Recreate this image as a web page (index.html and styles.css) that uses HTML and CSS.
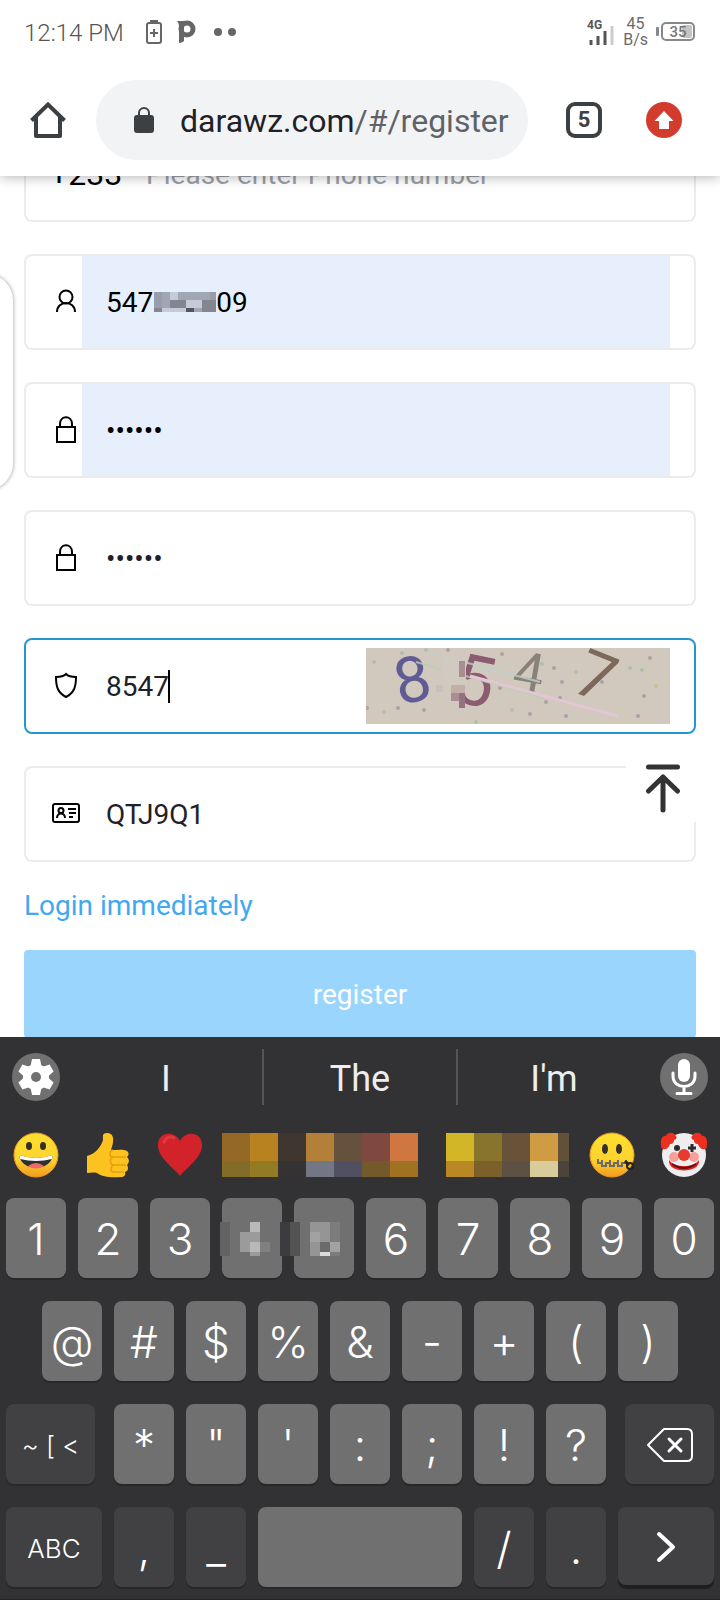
FILE: index.html
```html
<!DOCTYPE html>
<html lang="en">
<head>
    <meta charset="UTF-8" />
    <title>Register | darawz.com</title>
    <meta name="viewport" content="width=device-width, initial-scale=1.0" />
    <link rel="stylesheet" href="styles.css">
</head>
<body>
    <header class="top">
        <div class="status-bar">
            <span class="clock">12:14 PM</span>
            <svg class="notif" width="94" height="28" viewBox="0 0 94 28" fill="#666">
                <rect x="2" y="5" width="14" height="20" rx="2" fill="none" stroke="#666" stroke-width="2"/>
                <rect x="5" y="2" width="8" height="3"/>
                <path d="M9 11v8M5 15h8" stroke="#666" stroke-width="2"/>
                <circle cx="42" cy="11" r="6" fill="none" stroke="#666" stroke-width="5"/>
                <path d="M32 3h7v20q-2 2-5 2V8q0-3-2-5z"/>
                <circle cx="73" cy="14" r="4"/>
                <circle cx="87" cy="14" r="4"/>
            </svg>
            <div class="status-right">
                <svg width="28" height="28" viewBox="0 0 28 28">
                    <text x="0" y="11" class="net-type">4G</text>
                    <path d="M4 22v5M11 18v9M18 13v14" stroke="#555" stroke-width="3"/>
                    <path d="M25 8v19" stroke="#ccc" stroke-width="3"/>
                </svg>
                <span class="net-speed">45<br>B/s</span>
                <svg width="40" height="20" viewBox="0 0 40 20">
                    <rect x="0" y="5" width="3" height="9" rx="1" fill="#888"/>
                    <rect x="6" y="1" width="32" height="17" rx="4" fill="none" stroke="#888" stroke-width="2"/>
                    <rect x="26" y="3" width="10" height="13" rx="2" fill="#c4c4c4"/>
                    <text x="22" y="15" text-anchor="middle" class="battery-text">35</text>
                </svg>
            </div>
        </div>
        <div class="toolbar">
            <button class="icon-btn" aria-label="Home">
                <svg width="36" height="36" viewBox="0 0 36 36" fill="none" stroke="#3c4043" stroke-width="4" stroke-linejoin="round">
                    <path d="M1.500 18.500 18 2.500l16.500 16" stroke-linejoin="miter"/>
                    <path d="M6 15v19h24V15"/>
                </svg>
            </button>
            <div class="url-bar">
                <svg width="20" height="26" viewBox="0 0 20 26">
                    <rect y="8" width="20" height="18" rx="3" fill="#3c4043"/>
                    <path d="M5 9V6a5 5 0 0 1 10 0v3" fill="none" stroke="#3c4043" stroke-width="2"/>
                </svg>
                <span class="url">darawz.com<span class="path">/#/register</span></span>
            </div>
            <button class="tabs" aria-label="Tabs">5</button>
            <button class="icon-btn" aria-label="Update available">
                <svg width="36" height="36" viewBox="0 0 36 36">
                    <circle cx="18" cy="18" r="18" fill="#d33b2c"/>
                    <path d="M18 9 27.500 19H23v8H13v-8H8.500z" fill="#fff"/>
                </svg>
            </button>
        </div>
    </header>

    <main class="page">
        <form class="register-form">
            <div class="field">
                <span class="code">+233</span>
                <input class="phone" type="tel" placeholder="Please enter Phone number" aria-label="Phone number">
            </div>
            <div class="field">
                <label for="account">
                    <svg viewBox="0 0 32 32"><circle cx="16" cy="11" r="6.500"/><path d="M7 26c0-12 18-12 18 0"/></svg>
                </label>
                <input class="filled" type="text" id="account" value="547&#8199;&#8199;&#8199;&#8199;09" aria-label="Account">
                <svg class="account-mask" width="62" height="20" viewBox="0 0 62 20" shape-rendering="crispEdges">
                    <rect width="62" height="20" fill="#a1a6b4"/>
                    <path d="M0 16h8v4H0zM16 8h8v8h-8zM24 8h8v8h-8zM48 8h14v12H48z" fill="#82868f"/>
                    <path d="M16 0h8v8h-8zM8 16h8v4H8zM32 8h8v8h-8zM40 8h8v8h-8zM16 16h16v4H16z" fill="#c4cad8"/>
                    <path d="M0 0h8v16H0zM56 0h6v8h-6z" fill="#989dab"/>
                    <path d="M32 16h8v4h-8z" fill="#52555d"/>
                </svg>
            </div>
            <div class="field">
                <label for="password">
                    <svg viewBox="0 0 32 32"><path d="M7 13h18v15H7zM10 13v-3c0-9 12-9 12 0v3"/></svg>
                </label>
                <input class="filled" type="password" id="password" value="123456" aria-label="Password">
            </div>
            <div class="field">
                <label for="confirm">
                    <svg viewBox="0 0 32 32"><path d="M7 13h18v15H7zM10 13v-3c0-9 12-9 12 0v3"/></svg>
                </label>
                <input type="password" id="confirm" value="123456" aria-label="Confirm password">
            </div>
            <div class="field active">
                <label for="captcha">
                    <svg viewBox="0 0 32 32"><path d="M16 4c3 3 6 3 10 3 0 10-2 16-10 20C8 23 6 17 6 7c4 0 7 0 10-3z"/></svg>
                </label>
                <input class="code-input" type="text" id="captcha" value="8547" aria-label="Verification code">
                <span class="caret"></span>
                <svg class="captcha" width="304" height="76" viewBox="0 0 304 76">
                    <rect width="304" height="76" fill="#d2c9be"/>
                    <g fill="#b3bdac">
                        <circle cx="8" cy="14" r="2"/><circle cx="18" cy="64" r="2"/><circle cx="60" cy="2" r="2"/>
                        <circle cx="110" cy="74" r="2"/><circle cx="146" cy="62" r="2"/><circle cx="176" cy="16" r="2"/>
                        <circle cx="210" cy="24" r="2"/><circle cx="264" cy="20" r="2"/><circle cx="276" cy="22" r="2"/>
                        <circle cx="36" cy="5" r="2"/>
                    </g>
                    <g fill="#ada0a8">
                        <circle cx="1" cy="60" r="2"/><circle cx="32" cy="60" r="2"/><circle cx="58" cy="62" r="2"/>
                        <circle cx="82" cy="2" r="2"/><circle cx="136" cy="6" r="2"/><circle cx="134" cy="40" r="2"/>
                        <circle cx="164" cy="66" r="2"/><circle cx="180" cy="54" r="2"/><circle cx="194" cy="50" r="2"/>
                        <circle cx="196" cy="34" r="2"/><circle cx="200" cy="68" r="2"/><circle cx="188" cy="20" r="2"/>
                        <circle cx="272" cy="68" r="2"/><circle cx="278" cy="48" r="2"/><circle cx="284" cy="10" r="2"/>
                        <circle cx="236" cy="34" r="2"/>
                    </g>
                    <circle cx="290" cy="38" r="2" fill="#cdbf8c"/>
                    <g text-anchor="middle" class="captcha-text">
                        <text transform="translate(46 31) rotate(-12)" y="23" font-size="64" fill="#5f5c95">8</text>
                        <text transform="translate(109 33) rotate(12)" y="24" font-size="70" fill="#8b5b70">5</text>
                        <text transform="translate(163 24) rotate(10)" y="19" font-size="54" fill="#8a8279">4</text>
                        <text transform="translate(230 28) rotate(22)" y="23" font-size="66" fill="#7d695b">7</text>
                    </g>
                    <path d="M50 14 178 50" stroke="#b9d0b5" stroke-width="2" opacity=".8"/>
                    <path d="M60 4 174 34" stroke="#bfd0cc" stroke-width="2" opacity=".8"/>
                    <path d="M104 28 252 68" stroke="#e3c6d3" stroke-width="3"/>
                    <g shape-rendering="crispEdges">
                        <path d="M76 8h24v28H76z" fill="#d0cac0"/>
                        <path d="M93 13h6v16h-6z" fill="#a78e91"/>
                        <path d="M85 37h14v8H85z" fill="#c4aea8"/>
                        <path d="M85 45h8v8h-8z" fill="#aa8e91"/>
                        <path d="M93 45h6v15h-6z" fill="#94727f"/>
                        <path d="M70 37h7v7h-7z" fill="#c8c0be"/>
                    </g>
                </svg>
            </div>
            <div class="field">
                <label for="invite">
                    <svg viewBox="0 0 32 32">
                        <rect x="3" y="6" width="26" height="18" rx="2"/>
                        <circle cx="11" cy="12.500" r="2.500"/>
                        <path d="M7 20c0-6 8-6 8 0M18 11h8M19 15h7M19 19h4"/>
                    </svg>
                </label>
                <input type="text" id="invite" value="QTJ9Q1" aria-label="Invitation code">
            </div>
            <a class="login-link" href="#/login">Login immediately</a>
            <button class="register-btn" type="button">register</button>
        </form>
        <div class="edge-handle"></div>
        <button class="back-top" aria-label="Back to top">
            <svg width="36" height="50" viewBox="0 0 36 50" fill="none" stroke="#333" stroke-width="5" stroke-linecap="round" stroke-linejoin="round">
                <path d="M3.500 3h29M18 46V13M3.500 27 18 13l14.500 14"/>
            </svg>
        </button>
    </main>

    <section class="keyboard">
        <div class="suggestions">
            <button class="round" aria-label="Settings">
                <svg width="36" height="36" viewBox="0 0 36 36">
                    <g fill="#fff">
                        <circle cx="18" cy="18" r="13"/>
                        <path d="M14 0h8l2 10H12z"/>
                        <path d="M14 0h8l2 10H12z" transform="rotate(60 18 18)"/>
                        <path d="M14 0h8l2 10H12z" transform="rotate(120 18 18)"/>
                        <path d="M14 0h8l2 10H12z" transform="rotate(180 18 18)"/>
                        <path d="M14 0h8l2 10H12z" transform="rotate(240 18 18)"/>
                        <path d="M14 0h8l2 10H12z" transform="rotate(300 18 18)"/>
                    </g>
                    <circle cx="18" cy="18" r="5" fill="#707070"/>
                </svg>
            </button>
            <div class="words">
                <button>I</button>
                <button>The</button>
                <button>I'm</button>
            </div>
            <button class="round" aria-label="Voice input">
                <svg width="36" height="36" viewBox="0 0 36 36" fill="none" stroke="#fff" stroke-width="3" stroke-linecap="round">
                    <rect x="12" y="0" width="12" height="23" rx="6" fill="#fff" stroke="none"/>
                    <path d="M7 14v3c0 14 22 14 22 0v-3M18 28v5M11 34.500h14"/>
                </svg>
            </button>
        </div>

        <div class="emojis">
            <button aria-label="Grinning face">
                <svg width="48" height="48" viewBox="0 0 48 48">
                    <defs>
                        <linearGradient id="face" x2="0" y2="1">
                            <stop offset="0" stop-color="#fee02f"/><stop offset=".6" stop-color="#fdd32e"/><stop offset="1" stop-color="#f29a1f"/>
                        </linearGradient>
                    </defs>
                    <circle cx="24" cy="24" r="22" fill="url(#face)" stroke="#ed9a22"/>
                    <ellipse cx="17" cy="15" rx="3" ry="4" fill="#33302a"/>
                    <ellipse cx="31" cy="15" rx="3" ry="4" fill="#33302a"/>
                    <path d="M7 24q17 6 34 0c-2 17-32 17-34 0z" fill="#33302a"/>
                    <path d="M7 24q17 6 34 0l-1 4q-16 4-32 0z" fill="#fff"/>
                    <path d="M16 35q8-6 16 0-8 5-16 0z" fill="#ef6a6a"/>
                </svg>
            </button>
            <button aria-label="Thumbs up">
                <svg width="48" height="48" viewBox="0 0 48 48">
                    <path d="M3 25c8-2 14-9 16-16 0-4-1-7 4-7 8 0 7 9 4 17 6 0 13-1 16 1 3 3 1 5 0 6 3 3 2 6 0 8 2 3 1 6-2 7 1 3-1 5-4 5-9 1-19 0-24-4-4-1-7 0-10 0z" fill="#fcc21f"/>
                    <path d="M42 26H29c-4 0-4-6 0-7M42 34H30c-4 0-5-6-1-8M40 41H30c-4 0-4-6 0-7" fill="none" stroke="#e8a00e" stroke-width="1.500"/>
                </svg>
            </button>
            <button aria-label="Red heart">
                <svg width="48" height="48" viewBox="0 0 48 48">
                    <path d="M24 45C17 36 2 27 2 14 2 1 18-1 24 10 30-1 46 1 46 14c0 13-15 22-22 31z" fill="#d3232a"/>
                    <path d="M8 11c2-5 7-6 10-4" stroke="#dd3a3d" stroke-width="3" fill="none" stroke-linecap="round"/>
                </svg>
            </button>
            <svg class="mosaic mosaic-left" width="196" height="44" viewBox="0 0 196 44" shape-rendering="crispEdges">
                <path fill="#946926" d="M0 0h28v28H0z"/><path fill="#b88221" d="M28 0h28v28H28z"/>
                <path fill="#3f362f" d="M56 0h28v28H56z"/><path fill="#b38039" d="M84 0h28v28H84z"/>
                <path fill="#65513c" d="M112 0h28v28h-28z"/><path fill="#7f493f" d="M140 0h28v28h-28z"/>
                <path fill="#cf7641" d="M168 0h28v28h-28z"/>
                <path fill="#836b28" d="M0 28h28v16H0z"/><path fill="#937a25" d="M28 28h28v16H28z"/>
                <path fill="#353331" d="M56 28h28v16H56z"/><path fill="#737684" d="M84 28h28v16H84z"/>
                <path fill="#505062" d="M112 28h28v16h-28z"/><path fill="#74592a" d="M140 28h28v16h-28z"/>
                <path fill="#9e7220" d="M168 28h28v16h-28z"/>
            </svg>
            <svg class="mosaic mosaic-right" width="123" height="44" viewBox="0 0 123 44" shape-rendering="crispEdges">
                <path fill="#d3b628" d="M0 0h28v28H0z"/><path fill="#88752b" d="M28 0h28v28H28z"/>
                <path fill="#685338" d="M56 0h28v28H56z"/><path fill="#cf9b43" d="M84 0h28v28H84z"/>
                <path fill="#625037" d="M112 0h11v28h-11z"/>
                <path fill="#b98824" d="M0 28h28v16H0z"/><path fill="#7c602a" d="M28 28h28v16H28z"/>
                <path fill="#5c5142" d="M56 28h28v16H56z"/><path fill="#d9cb9c" d="M84 28h28v16H84z"/>
                <path fill="#4c443a" d="M112 28h11v16h-11z"/>
            </svg>
            <button aria-label="Zipper-mouth face">
                <svg width="48" height="48" viewBox="0 0 48 48">
                    <circle cx="24" cy="24" r="22" fill="url(#face)" stroke="#ed9a22"/>
                    <ellipse cx="17" cy="18" rx="3" ry="5" fill="#33302a"/>
                    <ellipse cx="31" cy="18" rx="3" ry="5" fill="#33302a"/>
                    <path d="M10 28v4h4v3h4v-3h4v3h4v-3h4v3h4v-3h5M14 32v-3M22 32v-3M30 32v-3M38 32v-3" fill="none" stroke="#6b6b68" stroke-width="2"/>
                    <path d="M37 30l4 4" stroke="#222" stroke-width="3"/>
                    <circle cx="42" cy="35" r="3" fill="none" stroke="#222" stroke-width="2"/>
                </svg>
            </button>
            <button aria-label="Clown face">
                <svg width="48" height="48" viewBox="0 0 48 48">
                    <circle cx="24" cy="24" r="22" fill="#eeeef0"/>
                    <path d="M1 15C0 8 3 4 6 5c1-4 8-4 9-1 3 2 1 5-1 5 0 4-3 4-4 4-1 5-8 8-9 2zM47 15c1-7-2-11-5-10-1-4-8-4-9-1-3 2-1 5 1 5 0 4 3 4 4 4 1 5 8 8 9 2z" fill="#ed2f20"/>
                    <circle cx="14" cy="26" r="5" fill="#f6a29b"/><circle cx="34" cy="26" r="5" fill="#f6a29b"/>
                    <circle cx="17" cy="17" r="3" fill="#2c2c30"/>
                    <path d="M32 13v8M28 17h8" stroke="#2c2c30" stroke-width="3"/>
                    <path d="M9 29c6 8 24 8 30 0 2 14-32 14-30 0z" fill="#e0231f"/>
                    <path d="M12 33q12 8 24 0" stroke="#64100f" stroke-width="2" fill="none"/>
                    <circle cx="24" cy="24" r="6" fill="#e63a2d"/>
                </svg>
            </button>
        </div>

        <div class="keys">
            <div class="key-row numbers">
                <button>1</button>
                <button>2</button>
                <button>3</button>
                <button class="masked" aria-label="4">
                    <svg class="key-mask" width="120" height="34" viewBox="0 0 120 34" shape-rendering="crispEdges">
                        <path fill="#626263" d="M0 0h10v34H0z"/>
                        <path fill="#b9b9b9" d="M30 0h10v10H30zM30 20h10v10H30z"/>
                        <path fill="#9b9b9b" d="M20 10h20v10H20zM20 20h10v10H20zM30 30h10v4H30z"/>
                        <path fill="#808080" d="M40 20h10v10H40z"/>
                        <path fill="#3c3c3e" d="M60 0h10v34H60z"/>
                        <path fill="#535354" d="M70 0h10v34H70z"/>
                        <path fill="#959595" d="M90 0h20v34H90z"/>
                        <path fill="#7c7c7c" d="M110 0h10v34h-10z"/>
                        <path fill="#a2a2a2" d="M90 10h10v10H90zM110 20h10v10h-10z"/>
                        <path fill="#6b6b6b" d="M100 20h10v10h-10z"/>
                        <path fill="#dcdcdc" d="M100 30h10v4h-10z"/>
                    </svg>
                </button>
                <button aria-label="5"></button>
                <button>6</button>
                <button>7</button>
                <button>8</button>
                <button>9</button>
                <button>0</button>
            </div>
            <div class="key-row symbols">
                <button>@</button>
                <button>#</button>
                <button>$</button>
                <button>%</button>
                <button>&amp;</button>
                <button>-</button>
                <button>+</button>
                <button>(</button>
                <button>)</button>
            </div>
            <div class="key-row marks">
                <button class="dark small wide-left">~ [ &lt;</button>
                <button>*</button>
                <button>"</button>
                <button>'</button>
                <button>:</button>
                <button>;</button>
                <button>!</button>
                <button>?</button>
                <button class="dark wide-right" aria-label="Delete">
                    <svg width="46" height="34" viewBox="0 0 46 34" fill="none" stroke="#fff" stroke-width="2" stroke-linecap="round" stroke-linejoin="round">
                        <path d="M1 17 17 1h23q5 0 5 5v22q0 5-5 5H17z"/>
                        <path d="m22 11 12 12M34 11 22 23" stroke-width="3"/>
                    </svg>
                </button>
            </div>
            <div class="key-row bottom">
                <button class="dark small">ABC</button>
                <button class="dark">,</button>
                <button class="dark">_</button>
                <button aria-label="Space"></button>
                <button class="dark">/</button>
                <button class="dark">.</button>
                <button class="dark next" aria-label="Next">
                    <svg width="20" height="32" viewBox="0 0 20 32" fill="none" stroke="#fff" stroke-width="4" stroke-linecap="round" stroke-linejoin="round">
                        <path d="m3 3 14 13L3 29"/>
                    </svg>
                </button>
            </div>
        </div>
    </section>
</body>
</html>
```

FILE: styles.css
```css
:root {
    --text-color: #1f2127;
    --border-color: #ebebed;
    --active-color: #2696d2;
    --link-color: #42a8f2;
    --button-color: #99d5fd;
    --autofill: #e7effc;
    --keyboard: #323234;
    --key: #707070;
    --key-dark: #414143;
}

* {
    box-sizing: border-box;
}

body {
    margin: 0;
    height: 100vh;
    display: flex;
    flex-direction: column;
    overflow: hidden;
    background: #fff;
    color: var(--text-color);
    font-family: Roboto, sans-serif;
    font-size: 28px;
}

button,
input {
    font: inherit;
    color: inherit;
    border: none;
    padding: 0;
    background: none;
    outline: none;
}

svg {
    display: block;
    flex: none;
}

/* Status bar and browser toolbar */
.top {
    position: relative;
    z-index: 2;
    background: #fff;
    box-shadow: 0 1px 12px rgba(0, 0, 0, 0.3);
}

.status-bar {
    display: flex;
    align-items: center;
    height: 64px;
    padding: 0 24px;
    color: #6b6b6b;
}

.clock {
    padding-top: 2px;
    font-size: 24px;
    font-weight: 300;
    color: #555;
}

.notif {
    margin-left: 21px;
}

.status-right {
    display: flex;
    align-items: center;
    gap: 8px;
    margin-left: auto;
}

.net-type {
    font-size: 12px;
    font-weight: 700;
    fill: #555;
}

.net-speed {
    font-size: 16px;
    line-height: 16px;
    text-align: center;
}

.battery-text {
    font-size: 15px;
    font-weight: 500;
    fill: #777;
}

.toolbar {
    display: flex;
    align-items: center;
    height: 112px;
    padding: 0 38px 0 30px;
}

.url-bar {
    display: flex;
    flex: 1;
    align-items: center;
    gap: 26px;
    height: 80px;
    margin: 0 38px 0 30px;
    padding-left: 38px;
    border-radius: 40px;
    background: #f1f3f4;
    font-size: 32px;
    white-space: nowrap;
}

.url {
    padding-top: 2px;
}

.url .path {
    color: #5f6368;
}

.tabs {
    width: 36px;
    height: 36px;
    margin-right: 44px;
    border: 4px solid #3c4043;
    border-radius: 9px;
    color: #3c4043;
    font-size: 22px;
    font-weight: 700;
    line-height: 28px;
}

/* Page, scrolled under the toolbar */
.page {
    position: relative;
    flex: 1;
    min-height: 0;
    overflow: hidden;
}

.register-form {
    display: flex;
    flex-direction: column;
    gap: 32px;
    margin-top: -50px;
    padding: 0 24px;
}

.field {
    position: relative;
    display: flex;
    align-items: center;
    height: 96px;
    padding: 0 24px;
    border: 2px solid var(--border-color);
    border-radius: 8px;
}

.field.active {
    border-color: var(--active-color);
}

.field label svg {
    width: 32px;
    height: 32px;
    fill: none;
    stroke: #000;
    stroke-width: 2;
}

.field input {
    flex: 1;
    min-width: 0;
    height: 100%;
    padding: 0 24px;
}

.field .filled {
    background: var(--autofill);
    color: #000;
}

.field input::placeholder {
    color: #9b9fa8;
    opacity: 1;
}

.code {
    font-size: 32px;
    color: #000;
}

.account-mask {
    position: absolute;
    left: 128px;
    top: 36px;
}

.caret {
    position: absolute;
    left: 142px;
    top: 30px;
    width: 2px;
    height: 33px;
    background: #000;
}

.captcha-text {
    font-weight: 400;
}

.login-link {
    align-self: flex-start;
    margin: -32px 0;
    line-height: 88px;
    color: var(--link-color);
    text-decoration: none;
}

.register-btn {
    height: 88px;
    border-radius: 4px;
    background: var(--button-color);
    color: #fff;
}

.edge-handle {
    position: absolute;
    left: -40px;
    top: 98px;
    width: 53px;
    height: 216px;
    border-radius: 32px;
    background: #fff;
    box-shadow: 0 0 4px rgba(0, 0, 0, 0.4);
}

.back-top {
    position: absolute;
    right: 20px;
    top: 572px;
    display: flex;
    align-items: center;
    justify-content: center;
    width: 74px;
    height: 74px;
    padding-top: 8px;
    background: #fff;
}

/* Keyboard */
.keyboard {
    background: var(--keyboard);
    color: #fff;
    font-family: Inter, sans-serif;
    font-weight: 300;
}

.suggestions {
    display: flex;
    align-items: center;
    gap: 10px;
    height: 80px;
    padding: 0 12px;
}

.round {
    display: flex;
    align-items: center;
    justify-content: center;
    width: 48px;
    height: 48px;
    border-radius: 50%;
    background: var(--key);
}

.words {
    display: flex;
    flex: 1;
    font-family: Roboto, sans-serif;
    font-size: 36px;
    font-weight: 400;
    color: #eee;
}

.words button {
    flex: 1;
    height: 56px;
    padding-top: 4px;
}

.words button + button {
    border-left: 2px solid #555557;
}

.emojis {
    display: grid;
    grid-template-columns: repeat(10, 1fr);
    align-items: center;
    justify-items: center;
    height: 76px;
}

.mosaic {
    justify-self: start;
}

.mosaic-left {
    grid-column: span 3;
    margin-left: 6px;
}

.mosaic-right {
    grid-column: span 2;
    margin-left: 14px;
}

.keys {
    display: flex;
    flex-direction: column;
    gap: 23px;
    padding: 5px 6px 12px;
    border-bottom: 1px solid #242426;
}

.key-row {
    display: grid;
    gap: 12px;
}

.key-row button {
    position: relative;
    display: flex;
    align-items: center;
    justify-content: center;
    height: 80px;
    padding-top: 2px;
    border-radius: 8px;
    background: var(--key);
    box-shadow: 0 2px 0 #28282a;
    font-size: 44px;
    white-space: nowrap;
}

.key-row .dark {
    background: var(--key-dark);
}

.key-row .small {
    font-size: 26px;
}

.key-row .next {
    height: 78px;
    box-shadow: 0 4px 0 #1f1f21;
}

.numbers {
    grid-template-columns: repeat(10, 1fr);
}

.symbols {
    grid-template-columns: repeat(9, 1fr);
    padding: 0 36px;
}

.marks {
    grid-template-columns: 96fr repeat(7, 60fr) 96fr;
}

.wide-left {
    margin-right: 7px;
}

.wide-right {
    margin-left: 7px;
}

.bottom {
    grid-template-columns: 96fr 60fr 60fr 204fr 60fr 60fr 96fr;
}

.key-row .masked {
    z-index: 1;
}

.key-mask {
    position: absolute;
    left: -2px;
    top: 24px;
}
```
